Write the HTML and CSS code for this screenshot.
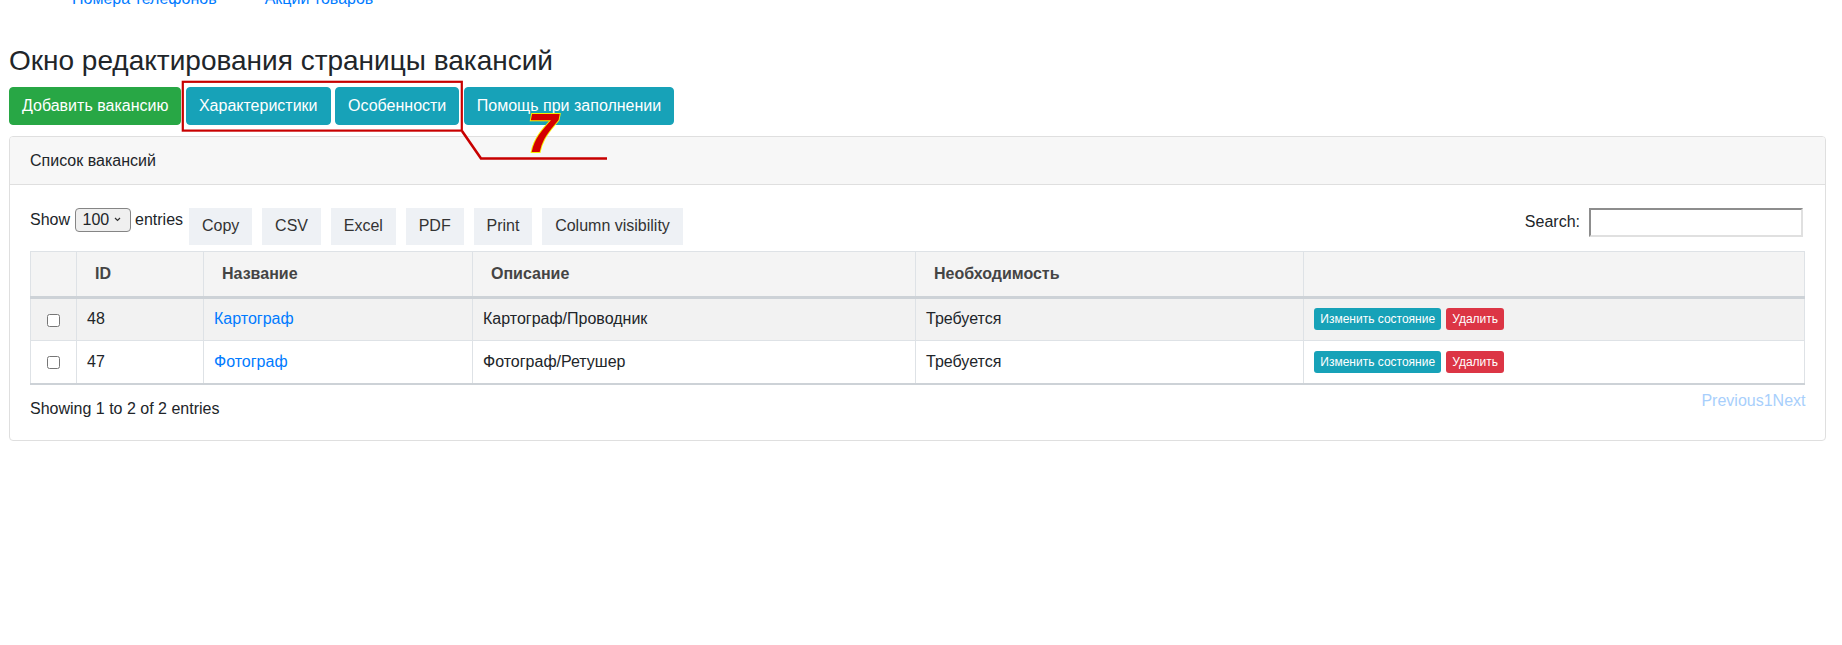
FILE: index.html
```html
<!DOCTYPE html>
<html lang="ru">
<head>
<meta charset="utf-8">
<title>Вакансии</title>
<link rel="stylesheet" href="styles.css">
</head>
<body>
<div class="page">
  <nav class="topnav">
    <a href="#" class="topnav-link">Номера телефонов</a>
    <a href="#" class="topnav-link">Акции товаров</a>
  </nav>
  <h3 class="title">Окно редактирования страницы вакансий</h3>
  <div class="actions">
    <button class="btn btn-success">Добавить вакансию</button>
    <button class="btn btn-info">Характеристики</button>
    <button class="btn btn-info">Особенности</button>
    <button class="btn btn-info">Помощь при заполнении</button>
  </div>
  <div class="card">
    <div class="card-header">Список вакансий</div>
    <div class="card-body">
      <div class="dt-toolbar">
        <div class="dt-left">
          <label class="dt-length">Show <span class="len-select">100<svg class="chev" width="7" height="5" viewBox="0 0 7 5"><path d="M1 1 L3.5 3.5 L6 1" fill="none" stroke="#333" stroke-width="1.2"/></svg></span> entries</label>
          <div class="dt-buttons">
            <button class="dt-btn">Copy</button>
            <button class="dt-btn">CSV</button>
            <button class="dt-btn">Excel</button>
            <button class="dt-btn">PDF</button>
            <button class="dt-btn">Print</button>
            <button class="dt-btn">Column visibility</button>
          </div>
        </div>
        <label class="dt-filter">Search: <input type="search" class="search-input"></label>
      </div>
      <table class="dt-table">
        <colgroup>
          <col class="c-check"><col class="c-id"><col class="c-name"><col class="c-desc"><col class="c-need"><col>
        </colgroup>
        <thead>
          <tr><th></th><th>ID</th><th>Название</th><th>Описание</th><th>Необходимость</th><th></th></tr>
        </thead>
        <tbody>
          <tr class="odd">
            <td class="cell-check"><input type="checkbox" class="chk"></td>
            <td>48</td>
            <td><a href="#" class="link">Картограф</a></td>
            <td>Картограф/Проводник</td>
            <td>Требуется</td>
            <td class="cell-actions"><button class="btn-xs btn-info">Изменить состояние</button><button class="btn-xs btn-danger">Удалить</button></td>
          </tr>
          <tr>
            <td class="cell-check"><input type="checkbox" class="chk"></td>
            <td>47</td>
            <td><a href="#" class="link">Фотограф</a></td>
            <td>Фотограф/Ретушер</td>
            <td>Требуется</td>
            <td class="cell-actions"><button class="btn-xs btn-info">Изменить состояние</button><button class="btn-xs btn-danger">Удалить</button></td>
          </tr>
        </tbody>
      </table>
      <div class="dt-footer">
        <div class="dt-info">Showing 1 to 2 of 2 entries</div>
        <div class="dt-paginate"><span>Previous</span><span>1</span><span>Next</span></div>
      </div>
    </div>
  </div>
  <svg class="annotation" width="640" height="170" viewBox="0 0 640 170">
    <rect x="182.8" y="81.8" width="279" height="48.8" fill="none" stroke="#c80000" stroke-width="2.2"/>
    <polyline points="462,131 481,158.5 607,158.5" fill="none" stroke="#c80000" stroke-width="2.6"/>
    <text x="527" y="151.7" class="anno-num">7</text>
  </svg>
</div>
</body>
</html>
```
FILE: styles.css
```css
html, body {
  margin: 0;
  padding: 0;
  background: #fff;
}
body {
  font-family: "Liberation Sans", Arial, sans-serif;
  font-size: 16px;
  line-height: 24px;
  color: #212529;
}
.page {
  position: relative;
  display: flow-root;
  padding: 0 16px 0 9px;
}
.topnav {
  display: flex;
  gap: 48px;
  margin-top: -13.5px;
  padding-left: 63px;
  height: 24px;
}
.topnav-link {
  color: #007bff;
  text-decoration: none;
}
.title {
  margin: 33.7px 0 9.5px 0;
  font-size: 28px;
  line-height: 33.6px;
  font-weight: 400;
  color: #212529;
}
.actions {
  display: flex;
  gap: 4.5px;
}
.btn {
  font-family: inherit;
  font-size: 16px;
  line-height: 24px;
  padding: 6px 12px;
  border: 1px solid transparent;
  border-radius: 4px;
  color: #fff;
  cursor: pointer;
}
.btn-success { background: #28a745; border-color: #28a745; }
.btn-info { background: #17a2b8; border-color: #17a2b8; color: #fff; }
.btn-danger { background: #dc3545; border-color: #dc3545; color: #fff; }

.card {
  margin-top: 10.4px;
  border: 1px solid #dfdfdf;
  border-radius: 4px;
  overflow: hidden;
}
.card-header {
  background: #f7f7f7;
  border-bottom: 1px solid #dfdfdf;
  padding: 12px 20px 11.5px 20px;
}
.card-body {
  padding: 20px 20px 19.5px 20px;
}
.dt-toolbar {
  display: flex;
  justify-content: space-between;
  align-items: flex-start;
  padding-top: 2.5px;
}
.dt-left {
  display: flex;
  align-items: flex-start;
  gap: 6px;
}
.dt-length {
  display: flex;
  align-items: center;
  gap: 4.5px;
  height: 24px;
  white-space: nowrap;
}
.len-select {
  display: inline-flex;
  align-items: center;
  justify-content: space-between;
  box-sizing: border-box;
  width: 56px;
  height: 24px;
  padding: 0 9px 0 7px;
  border: 1px solid #858585;
  border-radius: 4px;
  background: #efefef;
  font-size: 16px;
  line-height: 22px;
}
.chev { display: block; }
.dt-buttons {
  display: flex;
  gap: 10px;
}
.dt-btn {
  font-family: inherit;
  font-size: 16px;
  line-height: 24px;
  padding: 6.75px 12.9px;
  border: none;
  background: #eef1f5;
  color: #333;
  border-radius: 0;
}
.dt-filter {
  display: flex;
  align-items: center;
  gap: 9px;
  height: 29.4px;
  margin-right: 2.5px;
  white-space: nowrap;
}
.search-input {
  box-sizing: border-box;
  width: 213.5px;
  height: 29.4px;
  margin: 0;
  padding: 1px 4px;
  border-width: 2px;
  border-style: solid;
  border-color: #8d8d8d #e0e0e0 #e0e0e0 #8d8d8d;
  background: #fff;
  font-family: inherit;
  font-size: 14px;
  outline: none;
}
.dt-table {
  width: 100%;
  margin-top: 5.6px;
  border-collapse: collapse;
  table-layout: fixed;
}
.c-check { width: 46px; }
.c-id { width: 127px; }
.c-name { width: 269px; }
.c-desc { width: 443px; }
.c-need { width: 388px; }
.dt-table th {
  text-align: left;
  font-weight: 700;
  color: #444;
  background: #f4f4f4;
  padding: 10px 18px;
  border: 1px solid #dee2e6;
  border-bottom: 3px solid #cdd2d7;
}
.dt-table td {
  padding: 8.7px 10px;
  border: 1px solid #dee2e6;
  vertical-align: middle;
}
.dt-table tbody tr.odd td { background: #f2f2f2; }
.dt-table tbody tr:last-child td { border-bottom: 2px solid #cdd2d7; }
.cell-check { text-align: center; }
.chk {
  margin: 0;
  width: 13px;
  height: 13px;
  vertical-align: middle;
}
.link {
  color: #007bff;
  text-decoration: none;
}
.cell-actions {
  white-space: nowrap;
  font-size: 0;
}
.btn-xs {
  font-family: inherit;
  font-size: 12px;
  line-height: 18px;
  padding: 1px 5.3px;
  border: 1px solid transparent;
  border-radius: 3px;
  margin-right: 4.5px;
  vertical-align: middle;
}
.dt-footer {
  display: flex;
  justify-content: space-between;
  align-items: flex-start;
}
.dt-info {
  padding-top: 12px;
}
.dt-paginate {
  padding-top: 4px;
  color: #a8cffc;
  margin-right: -0.5px;
}
.annotation {
  position: absolute;
  left: 0;
  top: 0;
  pointer-events: none;
  overflow: visible;
}
.anno-num {
  font-family: "Liberation Sans", Arial, sans-serif;
  font-size: 55px;
  font-weight: 700;
  font-style: italic;
  fill: #d40000;
  stroke: #f5f000;
  stroke-width: 1.8px;
  paint-order: stroke;
}
```
